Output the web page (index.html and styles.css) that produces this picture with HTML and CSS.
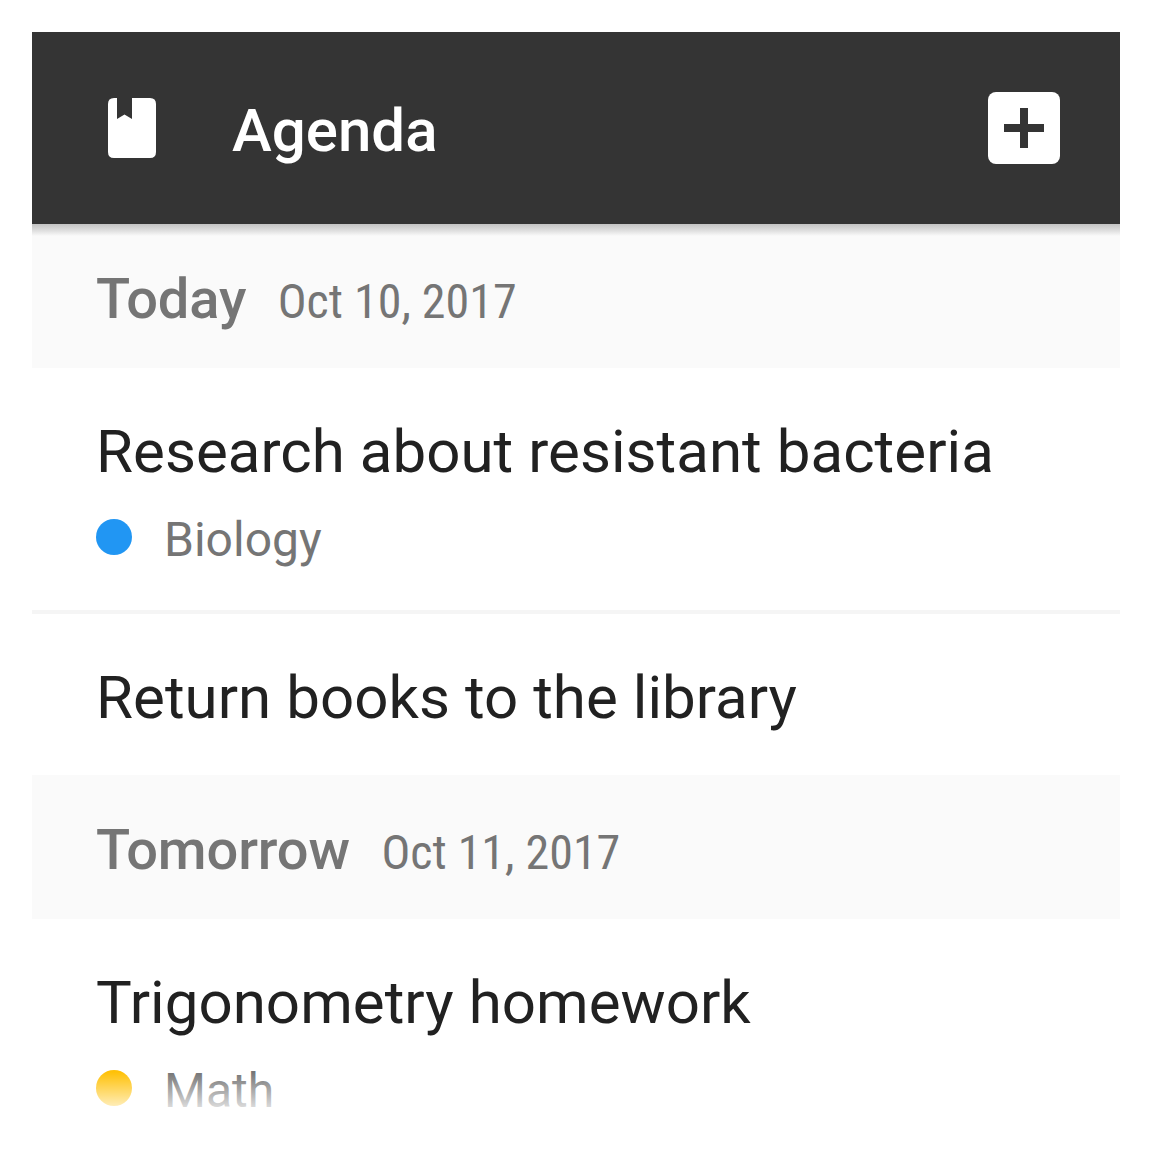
FILE: index.html
```html
<!DOCTYPE html>
<html lang="en">
<head>
<meta charset="utf-8">
<title>Agenda</title>
<link rel="stylesheet" href="styles.css">
</head>
<body>
<main class="screen">
  <header class="toolbar">
    <svg class="book" viewBox="0 0 48 60" aria-hidden="true"><path fill="#fff" d="M6 0H9V21L16.500 16.500L24 21V0H42Q48 0 48 6V54Q48 60 42 60H6Q0 60 0 54V6Q0 0 6 0Z"/></svg>
    <h1 class="title">Agenda</h1>
    <svg class="add" viewBox="0 0 72 72" aria-hidden="true"><rect width="72" height="72" rx="8" fill="#fff"/><path fill="#343434" d="M32 16h8v16h16v8H40v16h-8V40H16v-8h16z"/></svg>
  </header>
  <section>
    <h2 class="day"><span class="name">Today</span><span class="date">Oct 10, 2017</span></h2>
    <article class="task subject-task">
      <p class="task-title">Research about resistant bacteria</p>
      <p class="subject"><span class="dot blue"></span><span class="subject-name">Biology</span></p>
    </article>
    <article class="task divided"><p class="task-title">Return books to the library</p></article>
  </section>
  <section>
    <h2 class="day"><span class="name">Tomorrow</span><span class="date">Oct 11, 2017</span></h2>
    <article class="task subject-task">
      <p class="task-title">Trigonometry homework</p>
      <p class="subject"><span class="dot amber"></span><span class="subject-name">Math</span></p>
    </article>
  </section>
  <div class="fade"></div>
</main>
</body>
</html>
```
FILE: styles.css
```css
* { box-sizing: border-box; }
body { margin: 0; padding: 32px; background: #fff; font-family: Roboto, sans-serif; }
h1, h2, p { margin: 0; font-weight: 400; white-space: nowrap; }
svg { display: block; flex: none; }
.screen { position: relative; height: 1088px; overflow: hidden; }
.toolbar { position: relative; display: flex; align-items: center; height: 192px; padding: 0 60px 0 76px; background: #343434; }
.toolbar::after { content: ""; position: absolute; top: 100%; left: 0; right: 0; height: 12px; background: linear-gradient(rgba(0,0,0,.22), rgba(0,0,0,.12) 50%, rgba(0,0,0,0)); }
.book { width: 48px; height: 60px; }
.title { flex: 1; margin-left: 76px; padding-top: 4px; color: #fff; font-size: 60px; font-weight: 500; }
.add { width: 72px; height: 72px; }
.day { display: flex; align-items: baseline; height: 144px; padding: 42px 64px 0; background: #fafafa; color: #757575; line-height: 66px; }
.name { font-size: 56px; font-weight: 500; letter-spacing: -.12px; }
.date { margin-left: 31.5px; font-size: 48px; font-stretch: 75%; }
.task { height: 161px; padding: 49px 64px 0; color: #212121; }
.subject-task { height: 242px; }
.divided { height: 165px; border-top: 4px solid #f5f5f5; }
.task-title { font-size: 60px; line-height: 70px; letter-spacing: .05px; }
.subject { display: flex; align-items: center; height: 56px; margin-top: 22px; color: #757575; font-size: 48px; }
.subject-name { padding-top: 4px; }
.dot { width: 36px; height: 36px; margin-right: 32px; border-radius: 50%; }
.blue { background: #2196f3; }
.amber { background: #ffc107; }
.fade { position: absolute; right: 0; bottom: 0; left: 0; height: 48px; background: linear-gradient(rgba(255,255,255,0), #fff); }
```
